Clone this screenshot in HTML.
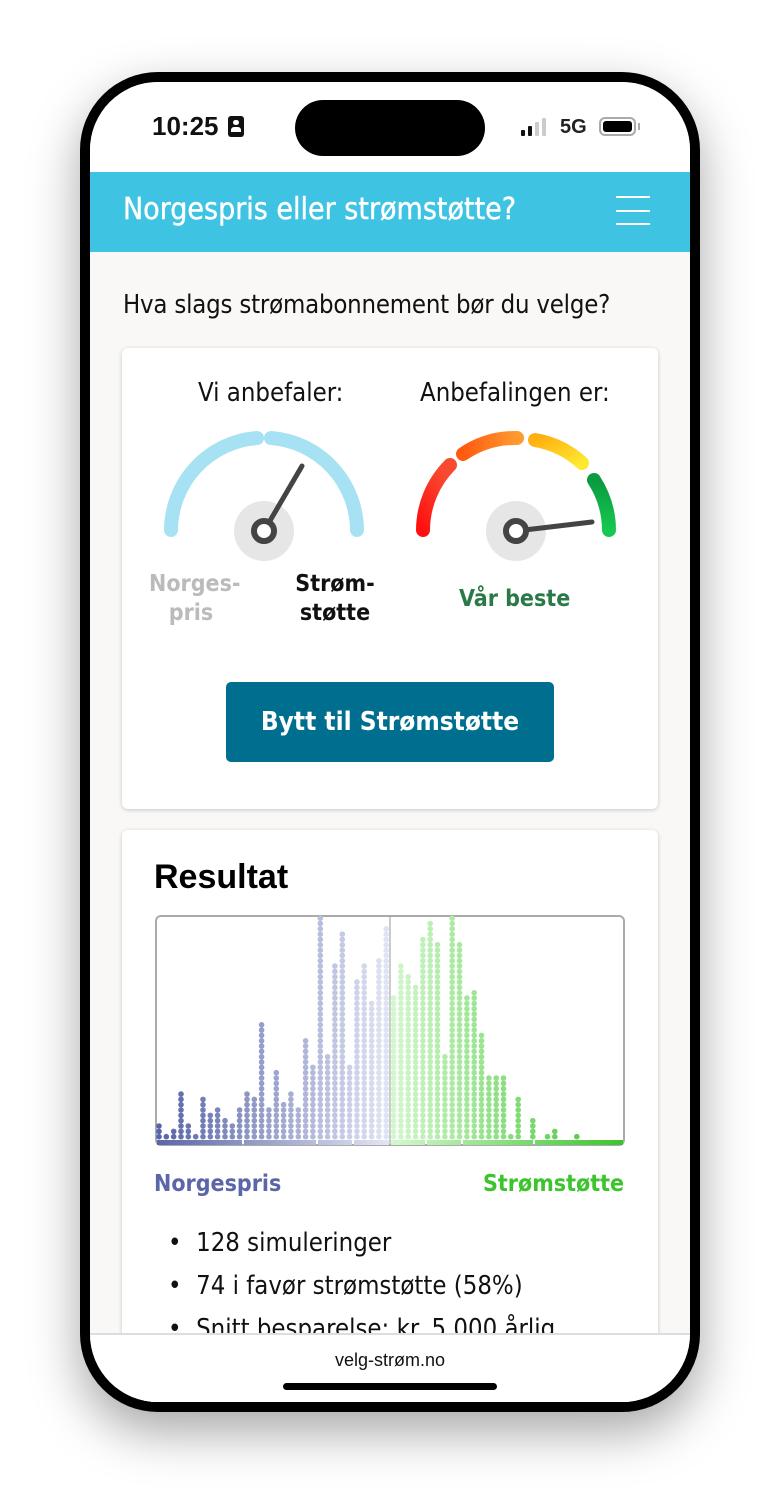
<!DOCTYPE html>
<html><head><meta charset="utf-8"><style>
*{margin:0;padding:0;box-sizing:border-box}
body{width:780px;height:1500px;background:#fff;position:relative;overflow:hidden;font-family:"Liberation Sans",sans-serif}
.phone{position:absolute;left:80px;top:72px;width:620px;height:1340px;border-radius:78px;background:#000;box-shadow:0 20px 50px rgba(0,0,0,.35)}
.screen{position:absolute;left:90px;top:82px;width:600px;height:1320px;border-radius:68px;background:#f9f8f6;overflow:hidden}
.abs{position:absolute}
.card{position:absolute;background:#fff;border-radius:6px;box-shadow:0 1px 4px rgba(0,0,0,.2)}
.t{font-family:"DejaVu Sans Condensed","Liberation Sans",sans-serif;}
</style></head><body>
<div class="phone"></div>
<div class="screen">
  <div class="abs" style="left:0;top:0;width:600px;height:90px;background:#fff"></div>
  <div class="abs" style="left:62px;top:29px;font-size:26px;font-weight:bold;color:#111">10:25</div>
  <div class="abs" style="left:138px;top:34px;width:16px;height:21px;background:#111;border-radius:3px"><div style="position:absolute;left:5px;top:4px;width:6px;height:5px;background:#fff;border-radius:3px"></div><div style="position:absolute;left:3px;top:11px;width:10px;height:5px;background:#fff;border-radius:3px 3px 0 0"></div></div>
  <div class="abs" style="left:205px;top:18px;width:190px;height:56px;background:#000;border-radius:28px"></div>
  <div class="abs" style="left:431px;top:48px;width:4px;height:6px;background:#111;border-radius:1px"></div>
  <div class="abs" style="left:438px;top:44px;width:4px;height:10px;background:#111;border-radius:1px"></div>
  <div class="abs" style="left:445px;top:40px;width:4px;height:14px;background:#ccc;border-radius:1px"></div>
  <div class="abs" style="left:452px;top:36px;width:4px;height:18px;background:#ccc;border-radius:1px"></div>
  <div class="abs" style="left:470px;top:34px;font-size:20px;font-weight:bold;color:#222">5G</div>
  <div class="abs" style="left:509px;top:35px;width:37px;height:19px;border:2px solid #aaa;border-radius:6px;padding:2px"><div style="width:100%;height:100%;background:#000;border-radius:3px"></div></div>
  <div class="abs" style="left:548px;top:41px;width:2px;height:7px;background:#aaa"></div>

  <div class="abs" style="left:0;top:90px;width:600px;height:80px;background:#3ec3e3"></div>
  <div class="abs t" style="left:33px;top:110px;font-size:30px;color:#fff;-webkit-text-stroke:0.4px #fff">Norgespris eller strømstøtte?</div>
  <div class="abs" style="left:526px;top:114px;width:34px;height:2px;background:#fff"></div>
  <div class="abs" style="left:526px;top:128px;width:34px;height:2px;background:#fff"></div>
  <div class="abs" style="left:526px;top:141px;width:34px;height:2px;background:#fff"></div>

  <div class="abs t" style="left:33px;top:208px;font-size:25.5px;color:#111;letter-spacing:-0.2px">Hva slags strømabonnement bør du velge?</div>

  <div class="card" style="left:32px;top:266px;width:536px;height:461px"></div>
  <div class="abs t" style="left:108px;top:296px;font-size:25.5px;color:#111">Vi anbefaler:</div>
  <div class="abs t" style="left:330px;top:296px;font-size:25.5px;color:#111">Anbefalingen er:</div>
  <div class="abs t" style="left:59px;top:488px;font-size:23px;font-weight:bold;color:#bbb;line-height:29px;text-align:center;width:84px">Norges-<br>pris</div>
  <div class="abs t" style="left:200px;top:488px;font-size:23px;font-weight:bold;color:#111;line-height:29px;text-align:center;width:90px">Strøm-<br>støtte</div>
  <div class="abs t" style="left:369px;top:504px;font-size:23px;font-weight:bold;color:#2a7a48">Vår beste</div>
  <div class="abs t" style="left:136px;top:600px;width:328px;height:80px;background:#006f8f;border-radius:5px;color:#fff;font-size:26px;font-weight:bold;text-align:center;line-height:80px">Bytt til Strømstøtte</div>

  <div class="card" style="left:32px;top:748px;width:536px;height:700px"></div>
  <div class="abs" style="left:64px;top:776px;font-size:34px;font-weight:bold;color:#000">Resultat</div>
  <div class="abs" style="left:65px;top:833px;width:470px;height:231px;border:2px solid #aaa;border-radius:6px;background:#fff"></div>
  <div class="abs t" style="left:64px;top:1089px;font-size:23px;font-weight:bold;color:#5a66a8">Norgespris</div>
  <div class="abs t" style="left:393px;top:1089px;font-size:23px;font-weight:bold;color:#3cc42c">Strømstøtte</div>
  <div class="abs t" style="left:78px;top:1140px;font-size:25.5px;color:#111;line-height:43px">•&nbsp;&nbsp;128 simuleringer<br>•&nbsp;&nbsp;74 i favør strømstøtte (58%)<br>•&nbsp;&nbsp;Snitt besparelse: kr. 5 000 årlig</div>

  <div class="abs" style="left:0;top:1251px;width:600px;height:80px;background:#fff;border-top:2px solid #ddd"></div>
  <div class="abs" style="left:0;top:1268px;width:600px;text-align:center;font-size:18px;color:#111">velg-strøm.no</div>
  <div class="abs" style="left:193px;top:1301px;width:214px;height:7px;background:#000;border-radius:4px"></div>
</div>
<svg id="s" class="abs" style="left:0;top:0" width="780" height="1500" viewBox="0 0 780 1500">
  <defs>
    <linearGradient id="red" x1="0" y1="1" x2="0.5" y2="0"><stop offset="0" stop-color="#ff1010"/><stop offset="1" stop-color="#f84a30"/></linearGradient>
    <linearGradient id="org" x1="0" y1="0" x2="1" y2="0"><stop offset="0" stop-color="#ff5a10"/><stop offset="1" stop-color="#ff9a30"/></linearGradient>
    <linearGradient id="yel" x1="0" y1="0" x2="1" y2="1"><stop offset="0" stop-color="#ffb010"/><stop offset="1" stop-color="#ffe830"/></linearGradient>
    <linearGradient id="grn" x1="0" y1="0" x2="0" y2="1"><stop offset="0" stop-color="#0a9a40"/><stop offset="1" stop-color="#15c850"/></linearGradient>
  </defs>
  <g fill="none" stroke-width="14" stroke-linecap="round">
    <path d="M171 530 A93 93 0 0 1 257 438" stroke="#a6e2f4"/>
    <path d="M271 438 A93 93 0 0 1 357 530" stroke="#a6e2f4"/>
    <path d="M423 530 A93 93 0 0 1 450 465" stroke="url(#red)"/>
    <path d="M463 454 A93 93 0 0 1 517 438" stroke="url(#org)"/>
    <path d="M535 440 A93 93 0 0 1 582 463" stroke="url(#yel)"/>
    <path d="M594 480 A93 93 0 0 1 609 530" stroke="url(#grn)"/>
  </g>
  <circle cx="264" cy="531" r="30" fill="#e6e6e6"/>
  <circle cx="516" cy="531" r="30" fill="#e6e6e6"/>
  <line x1="264" y1="531" x2="302" y2="466" stroke="#444" stroke-width="5" stroke-linecap="round"/>
  <line x1="516" y1="531" x2="592" y2="522" stroke="#444" stroke-width="5" stroke-linecap="round"/>
  <circle cx="264" cy="531" r="10" fill="#fff" stroke="#444" stroke-width="6"/>
  <circle cx="516" cy="531" r="10" fill="#fff" stroke="#444" stroke-width="6"/>
  <g id="dots"></g>
  <line x1="390" y1="916" x2="390" y2="1144" stroke="#999" stroke-width="1"/>
</svg>
<script>
var h=[3,1,2,9,3,1,8,5,6,4,3,6,9,8,22,6,13,7,9,6,19,14,42,16,33,39,14,30,33,26,34,40,27,33,31,29,38,41,37,16,42,37,27,28,20,12,12,12,1,8,0,4,0,1,2,0,0,1];
function lerp(a,b,t){return a.map(function(v,i){return Math.round(v+(b[i]-v)*t)})}
var s='';
for(var i=0;i<h.length;i++){
 var x=159+i*7.33,c;
 if(x<390){c=lerp([88,100,168],[226,229,244],(x-159)/231);}else{c=lerp([212,247,206],[60,196,44],(x-392)/233);}
 var col='rgb('+c.join(',')+')';
 for(var j=0;j<h[i];j++){s+='<circle cx="'+x.toFixed(1)+'" cy="'+(1136.7-j*5.33).toFixed(1)+'" r="2.8" fill="'+col+'"/>';}
}
var bars=[[157,242],[244,316],[318,352],[354,389],[391,425],[427,461],[463,533],[535,623]];
s+='<defs><linearGradient id="bb" x1="157" x2="623" gradientUnits="userSpaceOnUse"><stop offset="0" stop-color="#5a66a8"/><stop offset=".495" stop-color="#e2e5f4"/><stop offset=".505" stop-color="#d4f7ce"/><stop offset="1" stop-color="#3cc42c"/></linearGradient></defs>';
bars.forEach(function(b){s+='<rect x="'+b[0]+'" y="1140" width="'+(b[1]-b[0])+'" height="5" fill="url(#bb)"/>'});
document.getElementById('dots').innerHTML=s;
</script>
</body></html>
